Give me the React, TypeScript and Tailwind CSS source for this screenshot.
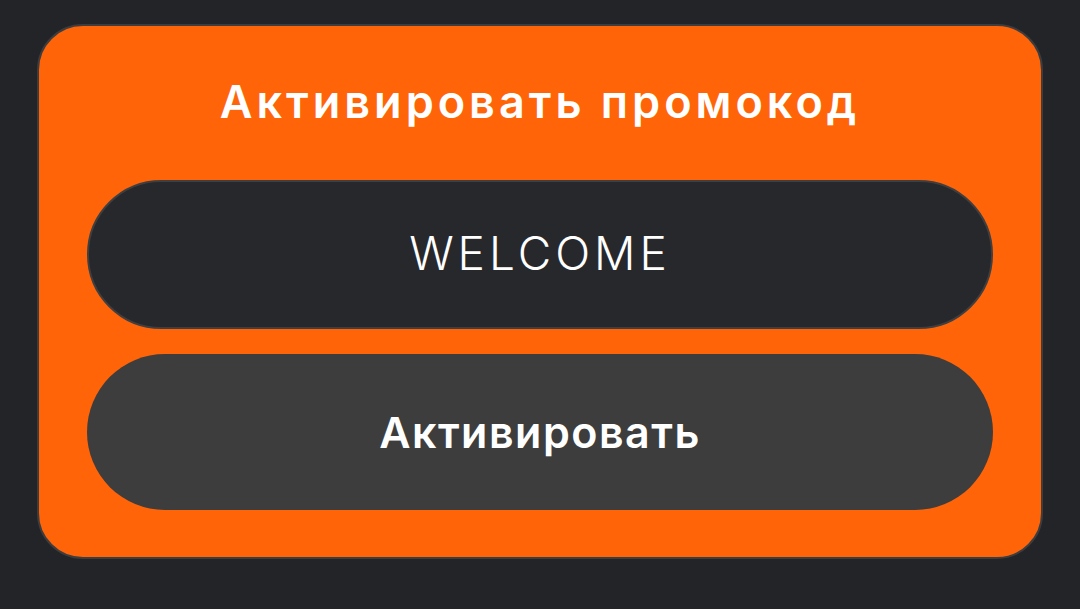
export default function App() {
  return (
    <div
      className="min-h-screen bg-[#232428] px-[37px] pt-[24px]"
      style={{ fontFamily: 'Inter, "Noto Sans", sans-serif' }}
    >
      <div className="flex flex-col rounded-[46px] border-2 border-[#3d3d3f] bg-[#ff6508] px-[48px] pb-[47px] pt-[48px]">
        <h1 className="mb-[50px] h-[56px] text-center text-[45px] font-semibold leading-[56px] tracking-[4px] text-white">
          Активировать промокод
        </h1>
        <input
          defaultValue="WELCOME"
          className="h-[149px] w-full rounded-full border-2 border-[#3f3f41] bg-[#27282c] pb-[4px] text-center text-[46px] font-light tracking-[4px] text-white outline-none"
        />
        <button className="mt-[25px] h-[156px] w-full rounded-full bg-[#3d3d3d] text-[43px] font-semibold tracking-[1.5px] text-white">
          Активировать
        </button>
      </div>
    </div>
  );
}
